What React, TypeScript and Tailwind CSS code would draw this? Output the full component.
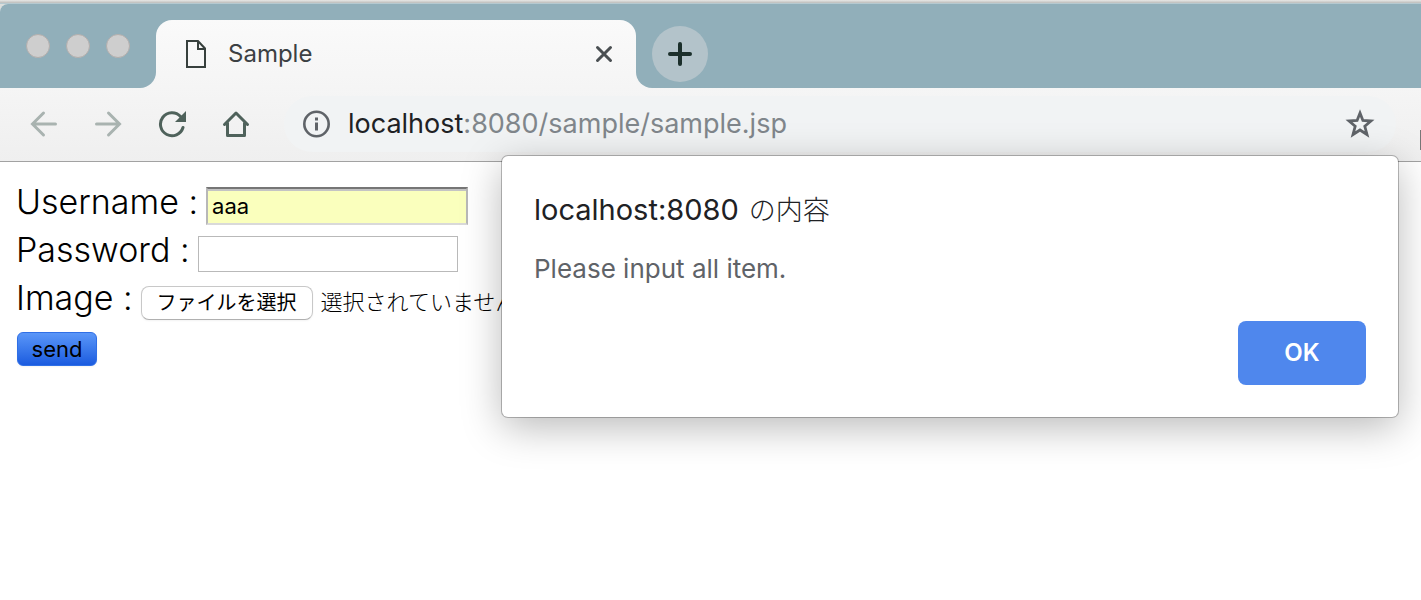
import { useRef } from "react";

const BackIcon = () => (
  <svg width="28" height="28" viewBox="0 0 28 28" fill="none" stroke="#a9b3b0" strokeWidth="3" strokeLinecap="round">
    <path d="M25.500 14H3M13.500 3L2.500 14L13.500 25" />
  </svg>
);

const ForwardIcon = () => (
  <svg width="28" height="28" viewBox="0 0 28 28" fill="none" stroke="#a9b3b0" strokeWidth="3" strokeLinecap="round">
    <path d="M2.500 14H25M14.500 3L25.500 14L14.500 25" />
  </svg>
);

const ReloadIcon = () => (
  <svg width="28" height="28" viewBox="0 0 28 28" fill="none">
    <path
      d="M25 17.500A11.500 11.500 0 1 1 22.500 6.500"
      stroke="#4f625b"
      strokeWidth="3"
      strokeLinecap="round"
    />
    <path d="M28 1V12H17Z" fill="#4f625b" />
  </svg>
);

const HomeIcon = () => (
  <svg width="28" height="28" viewBox="0 0 28 28" fill="none" stroke="#4f625b" strokeWidth="3" strokeLinecap="round" strokeLinejoin="round">
    <path d="M2.500 14.500L14 3L25.500 14.500M5.500 13V25.500H22.500V13" />
  </svg>
);

const InfoIcon = () => (
  <svg width="28" height="28" viewBox="0 0 28 28" fill="none" className="shrink-0">
    <circle cx="14.500" cy="14" r="12.200" stroke="#5f6368" strokeWidth="2.600" />
    <path d="M13 7.500h3v3h-3zM13 12.500h3v8h-3z" fill="#5f6368" />
  </svg>
);

const StarIcon = () => (
  <svg width="30" height="30" viewBox="0 0 30 30" fill="none" stroke="#5f6368" strokeWidth="2.800">
    <path d="M15 4L17.900 11.400L26 12L19.800 17.300L22 25.500L15 21L8 25.500L10.200 17.300L4 12L12.100 11.400Z" />
  </svg>
);

const PageIcon = () => (
  <svg width="20" height="28" viewBox="0 0 20 28" fill="none" stroke="#37403d" strokeWidth="2">
    <path d="M1 1H12L19 8.500V27H1Z" />
    <path d="M12 1V9H19" />
  </svg>
);

const TabBar = () => (
  <div className="flex h-[84px] overflow-hidden rounded-tl-lg bg-[#f5f5f5]">
    <div className="flex w-[156px] shrink-0 gap-4 rounded-br-2xl bg-[#91afba] pl-[26px] pt-[30px]">
      <span className="size-6 rounded-full border border-[#b3aeac] bg-[#cecece]" />
      <span className="size-6 rounded-full border border-[#b3aeac] bg-[#cecece]" />
      <span className="size-6 rounded-full border border-[#b3aeac] bg-[#cecece]" />
    </div>
    <div className="w-[480px] bg-[#91afba] pt-4">
      <div className="flex h-[68px] items-center rounded-t-2xl bg-linear-to-b from-[#fafafa] to-[#f5f5f5] pl-[30px] pr-[22px]">
        <PageIcon />
        <span className="ml-[22px] flex-1 text-2xl text-[#3c4043]">Sample</span>
        <button aria-label="Close tab" className="flex size-5 items-center justify-center">
          <svg width="18" height="18" viewBox="0 0 18 18" stroke="#4a4f52" strokeWidth="3" strokeLinecap="round">
            <path d="M2.500 2.500L15.500 15.500M15.500 2.500L2.500 15.500" />
          </svg>
        </button>
      </div>
    </div>
    <div className="flex-1 rounded-bl-2xl bg-[#91afba] pl-4 pt-[22px]">
      <button aria-label="New tab" className="flex size-14 items-center justify-center rounded-full bg-[#b3c3ca]">
        <svg width="24" height="24" viewBox="0 0 24 24" stroke="#1b2f2b" strokeWidth="4" strokeLinecap="round">
          <path d="M12 2V22M2 12H22" />
        </svg>
      </button>
    </div>
  </div>
);

const Toolbar = () => (
  <div className="flex h-[74px] items-center border-b border-[#a2a2a2] bg-linear-to-b from-[#f5f5f5] to-[#efefef] pb-0.5 pl-3">
    <button aria-label="Back" className="flex w-16 justify-center">
      <BackIcon />
    </button>
    <button aria-label="Forward" className="flex w-16 justify-center">
      <ForwardIcon />
    </button>
    <button aria-label="Reload" className="flex w-16 justify-center">
      <ReloadIcon />
    </button>
    <button aria-label="Home" className="flex w-16 justify-center">
      <HomeIcon />
    </button>
    <div className="ml-4 flex h-14 min-w-0 flex-1 items-center rounded-full bg-[#f1f3f4] pl-[18px] pr-[21px]">
      <InfoIcon />
      <div role="textbox" aria-label="Address" className="ml-[18px] flex-1 truncate text-[27px] leading-10 text-[#202124]">
        localhost<span className="text-[#80868b]">:8080/sample/sample.jsp</span>
      </div>
      <button aria-label="Bookmark this page">
        <StarIcon />
      </button>
    </div>
    <span className="ml-6 mt-8 h-5 w-px bg-[#777777]" />
  </div>
);

const SampleForm = () => {
  const fileRef = useRef<HTMLInputElement>(null);
  return (
    <form className="px-4 pt-4 text-[34px] font-light text-black" onSubmit={(e) => e.preventDefault()}>
      <div className="flex h-12 items-baseline gap-2 leading-12">
        <label htmlFor="username">Username :</label>
        <input
          id="username"
          type="text"
          defaultValue="aaa"
          className="h-[38px] w-[262px] border-2 border-t-[#767676] border-x-[#b8b8b8] border-b-[#d9d9d9] bg-[#faffbd] px-1 text-[22px] font-normal inset-shadow-[0_2px_0_#c4c4c4] outline-none"
        />
      </div>
      <div className="flex h-12 items-baseline gap-2 leading-12">
        <label htmlFor="password">Password :</label>
        <input
          id="password"
          type="password"
          className="h-9 w-[260px] border border-[#b9b9b9] bg-white px-1 text-[22px] outline-none"
        />
      </div>
      <div className="flex h-12 items-baseline gap-2 whitespace-nowrap leading-12">
        <label htmlFor="image">Image :</label>
        <input id="image" ref={fileRef} type="file" className="hidden" />
        <button
          type="button"
          onClick={() => fileRef.current?.click()}
          className="h-[34px] rounded-lg border border-[#c8c8c8] border-b-[#b0b0b0] bg-white px-[15px] text-xl leading-8 font-normal shadow-xs"
        >
          ファイルを選択
        </button>
        <span className="text-[22px]">選択されていません</span>
      </div>
      <div className="pt-2.5 leading-none">
        <button
          type="submit"
          className="ml-px block h-[34px] w-20 rounded-md border border-[#2f6fe6] bg-linear-to-b from-[#5a96f8] to-[#1b5bdf] text-[22px] leading-8 font-normal shadow-xs"
        >
          send
        </button>
      </div>
    </form>
  );
};

const AlertDialog = () => (
  <div
    role="alertdialog"
    aria-labelledby="alert-title"
    aria-describedby="alert-message"
    className="absolute right-[23px] top-[156px] w-[896px] rounded-md bg-white p-8 shadow-[0_0_0_1px_rgba(0,0,0,0.25),0_10px_40px_rgba(0,0,0,0.28)]"
  >
    <h1 id="alert-title" className="flex items-baseline gap-2.5 text-[29px] leading-11 text-[#202124]">
      localhost:8080 <span className="text-[27px] font-light">の内容</span>
    </h1>
    <p id="alert-message" className="mt-[18px] text-[26px] leading-9 text-[#5f6368]">
      Please input all item.
    </p>
    <div className="mt-[34px] flex justify-end">
      <button className="h-16 w-32 rounded-lg bg-[#4f87ed] text-2xl font-semibold text-white">OK</button>
    </div>
  </div>
);

export default function App() {
  return (
    <div className="relative min-h-screen overflow-hidden bg-white font-['Inter','Noto_Sans_CJK_JP',sans-serif]">
      <div className="bg-[#dcdedc]">
        <div className="h-1 border-b border-[#b5c9d0] bg-linear-to-b from-[#e8e8e6] to-[#bdbdbb]" />
        <TabBar />
      </div>
      <Toolbar />
      <SampleForm />
      <AlertDialog />
    </div>
  );
}
